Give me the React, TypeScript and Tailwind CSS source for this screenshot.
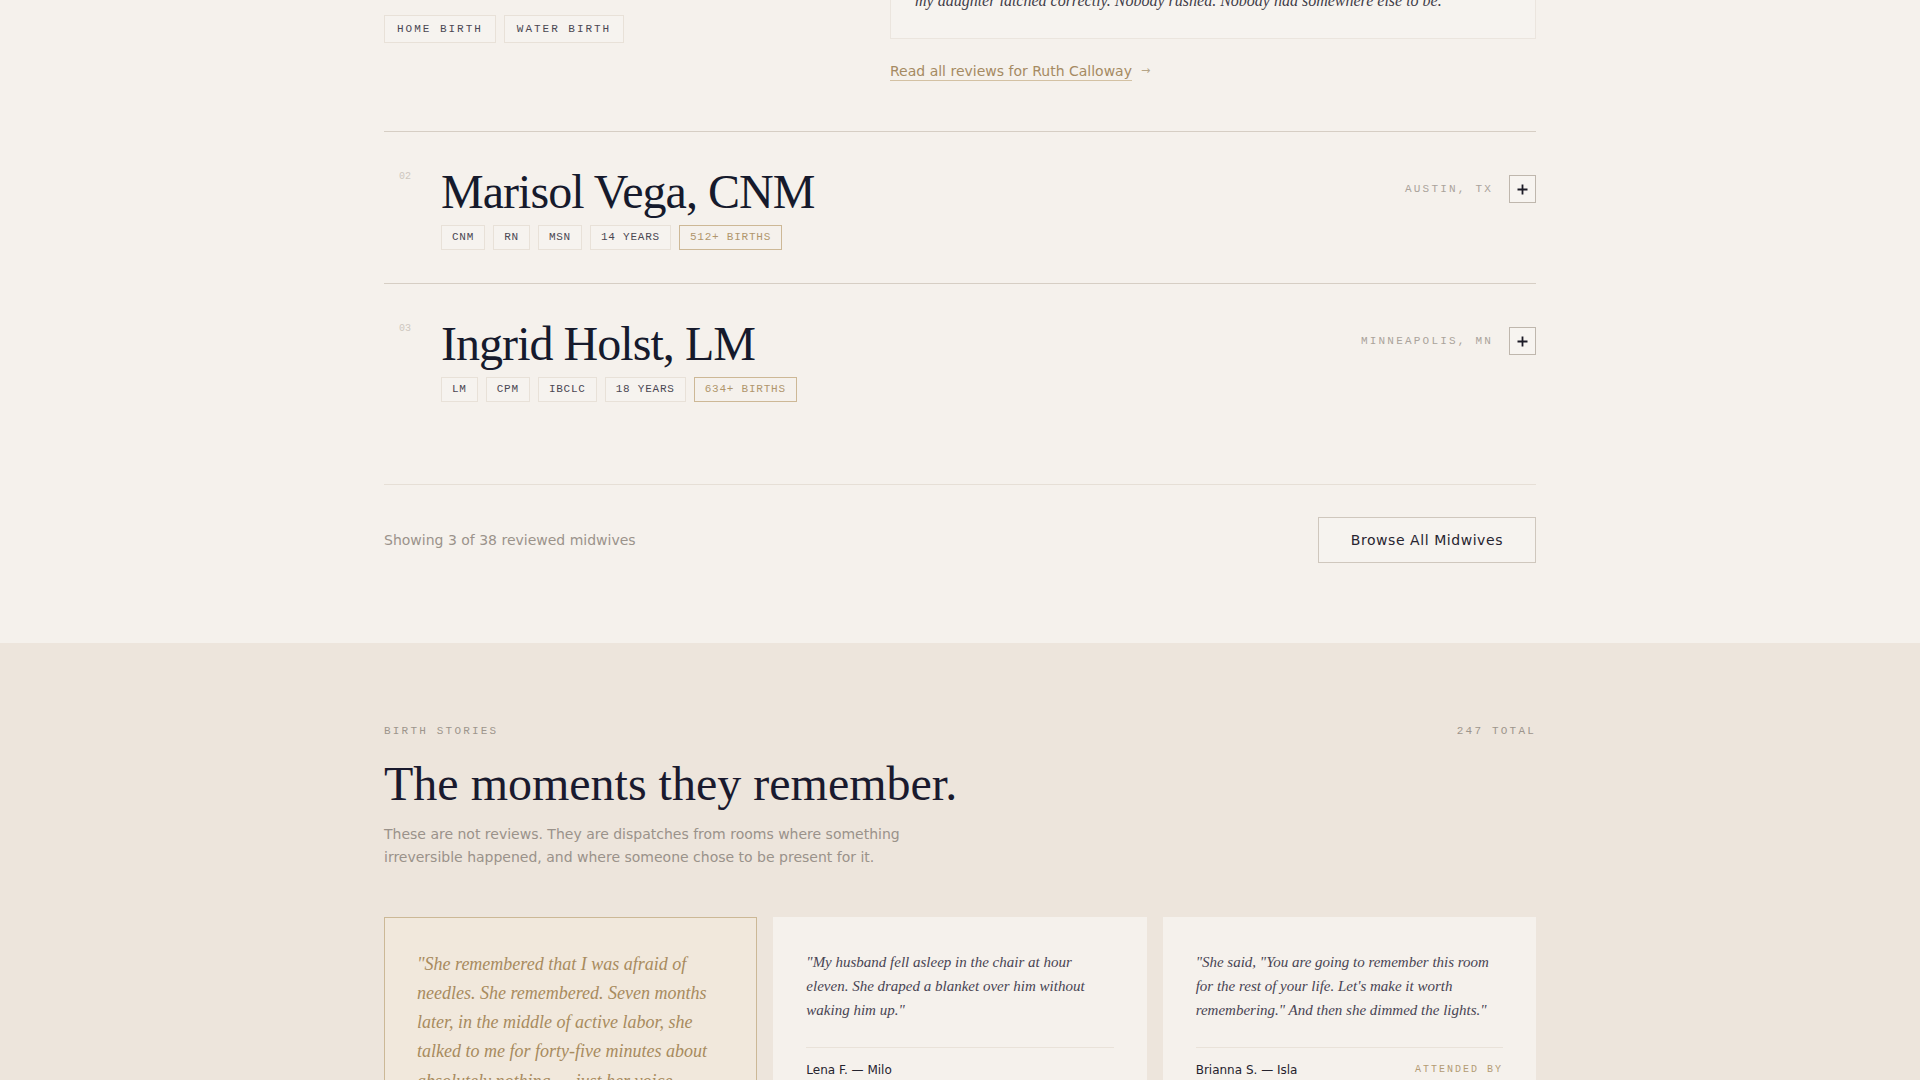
import React from 'react';

const serif = "font-['Liberation_Serif',_'Times_New_Roman',_serif]";
const sans = "font-['DejaVu_Sans',_'Noto_Sans',_sans-serif]";
const mono = "font-['Liberation_Mono',_'DejaVu_Sans_Mono',_monospace]";

type Midwife = {
  no: string;
  name: string;
  creds: string[];
  births: string;
  location: string;
};

const midwives: Midwife[] = [
  { no: '02', name: 'Marisol Vega, CNM', creds: ['CNM', 'RN', 'MSN', '14 YEARS'], births: '512+ BIRTHS', location: 'AUSTIN, TX' },
  { no: '03', name: 'Ingrid Holst, LM', creds: ['LM', 'CPM', 'IBCLC', '18 YEARS'], births: '634+ BIRTHS', location: 'MINNEAPOLIS, MN' },
];

function Tag({ children, gold }: { children: React.ReactNode; gold?: boolean }) {
  return (
    <span
      className={`${mono} border px-[10px] py-[5px] text-[11px] leading-[13px] tracking-[0.07em] ${
        gold ? 'border-[#cdb896] text-[#b0966d]' : 'border-[#e8e1d8] bg-[#f6f3ef] text-[#4b4752]'
      }`}
    >
      {children}
    </span>
  );
}

function MidwifeRow({ m }: { m: Midwife }) {
  return (
    <div className="flex items-start border-t border-[#d6cec4] pt-9 pb-[33px]">
      <div className={`${mono} w-[57px] pl-[15px] pt-px text-[10px] leading-[15px] text-[#cec7bf]`}>{m.no}</div>
      <div className="flex-1">
        <h3 className={`${serif} text-[48px] leading-none tracking-[-0.02em] text-[#161a2c]`}>{m.name}</h3>
        <div className="mt-[9px] flex gap-2">
          {m.creds.map((c) => (
            <Tag key={c}>{c}</Tag>
          ))}
          <Tag gold>{m.births}</Tag>
        </div>
      </div>
      <div className="mt-[7px] flex items-center gap-4">
        <span className={`${mono} text-[11px] tracking-[0.2em] text-[#aaa39b]`}>{m.location}</span>
        <button className="flex h-[28px] w-[27px] items-center justify-center border border-[#bfb7ad] bg-[#f7f4f0]">
          <svg width="11" height="11" viewBox="0 0 11 11" fill="none" stroke="#1c1b26" strokeWidth="1.8">
            <path d="M5.5 0.5v10M0.5 5.5h10" />
          </svg>
        </button>
      </div>
    </div>
  );
}

type Story = { quote: string; by?: string; attended?: boolean; featured?: boolean };

const stories: Story[] = [
  {
    quote:
      '"She remembered that I was afraid of needles. She remembered. Seven months later, in the middle of active labor, she talked to me for forty-five minutes about absolutely nothing — just her voice, steady, until it was over and I had not even noticed."',
    by: 'Dana K. — Theo',
    featured: true,
  },
  {
    quote: '"My husband fell asleep in the chair at hour eleven. She draped a blanket over him without waking him up."',
    by: 'Lena F. — Milo',
  },
  {
    quote:
      '"She said, "You are going to remember this room for the rest of your life. Let\'s make it worth remembering." And then she dimmed the lights."',
    by: 'Brianna S. — Isla',
    attended: true,
  },
];

function StoryCard({ s }: { s: Story }) {
  return (
    <div className={`border p-8 ${s.featured ? 'border-[#ccb896] bg-[#f1e8dc]' : 'border-[#f5f1ec] bg-[#f5f1ec]'}`}>
      <p
        className={`${serif} italic leading-[1.625] ${
          s.featured ? 'text-[18px] text-[#a88b5e]' : 'text-[15px] text-[#484453]'
        }`}
      >
        {s.quote}
      </p>
      <div className="mt-6 flex items-start justify-between border-t border-[#e9e2d9] pt-3">
        <span className={`${sans} text-[12px] leading-5 text-[#25232e]`}>{s.by}</span>
        {s.attended && (
          <span className={`${mono} text-[10px] leading-5 tracking-[0.2em] text-[#b39b74]`}>ATTENDED BY</span>
        )}
      </div>
    </div>
  );
}

export default function App() {
  return (
    <div className={`${sans} min-h-screen bg-[#ede5dc]`}>
      <section className="bg-[#f5f1ec] pb-20">
        <div className="mx-auto w-[1152px]">
          {/* tail of the expanded first profile */}
          <div className="flex h-[131px] flex-col justify-end overflow-hidden">
            <div className="grid grid-cols-[1fr_646px] items-end gap-10 pb-12">
              <div className="mb-[40px] flex gap-2">
                {['HOME BIRTH', 'WATER BIRTH'].map((t) => (
                  <span
                    key={t}
                    className={`${mono} border border-[#e8e1d8] bg-[#f6f3ef] px-3 py-[6px] text-[11px] leading-[14px] tracking-[0.18em] text-[#4b4752]`}
                  >
                    {t}
                  </span>
                ))}
              </div>
              <div>
                <div className="border border-[#ebe5de] bg-[#f6f3ef] p-6">
                  <p className={`${serif} text-[16px] italic leading-[26px] text-[#3f3c48]`}>
                    "She stayed for six hours after the birth. She made tea, checked my stitches twice, and waited until
                    <br />
                    my daughter latched correctly. Nobody rushed. Nobody had somewhere else to be.
                  </p>
                </div>
                <a
                  href="#"
                  className="mt-[22px] inline-flex items-center gap-[9px] text-[14px] leading-5 text-[#a58a62]"
                >
                  <span className="underline decoration-[#d3c1a3] underline-offset-4">Read all reviews for Ruth Calloway</span>
                  <span className="text-[11px] text-[#b5a587]">→</span>
                </a>
              </div>
            </div>
          </div>

          {midwives.map((m) => (
            <MidwifeRow key={m.no} m={m} />
          ))}

          <div className="mt-[49px] flex items-center justify-between border-t border-[#e6dfd6] pt-8">
            <span className="text-[14px] text-[#9b938b]">Showing 3 of 38 reviewed midwives</span>
            <button className="border border-[#cfc7bd] bg-[#f6f3ef] px-8 py-3 text-[14px] leading-5 tracking-[0.04em] text-[#27242f]">
              Browse All Midwives
            </button>
          </div>
        </div>
      </section>

      <section className="bg-[#ede5dc] pt-20 pb-20">
        <div className="mx-auto w-[1152px]">
          <div className={`${mono} flex justify-between text-[11px] leading-4 tracking-[0.2em] text-[#9d958c]`}>
            <span>BIRTH STORIES</span>
            <span>247 TOTAL</span>
          </div>
          <h2 className={`${serif} mt-[21px] text-[48px] leading-none text-[#1a1a2e]`}>The moments they remember.</h2>
          <p className="mt-[15px] max-w-[540px] text-[14px] leading-[1.625] text-[#9a928a]">
            These are not reviews. They are dispatches from rooms where something irreversible happened, and where
            someone chose to be present for it.
          </p>
          <div className="mt-12 grid grid-cols-3 items-start gap-4">
            {stories.map((s, i) => (
              <StoryCard key={i} s={s} />
            ))}
          </div>
        </div>
      </section>
    </div>
  );
}
